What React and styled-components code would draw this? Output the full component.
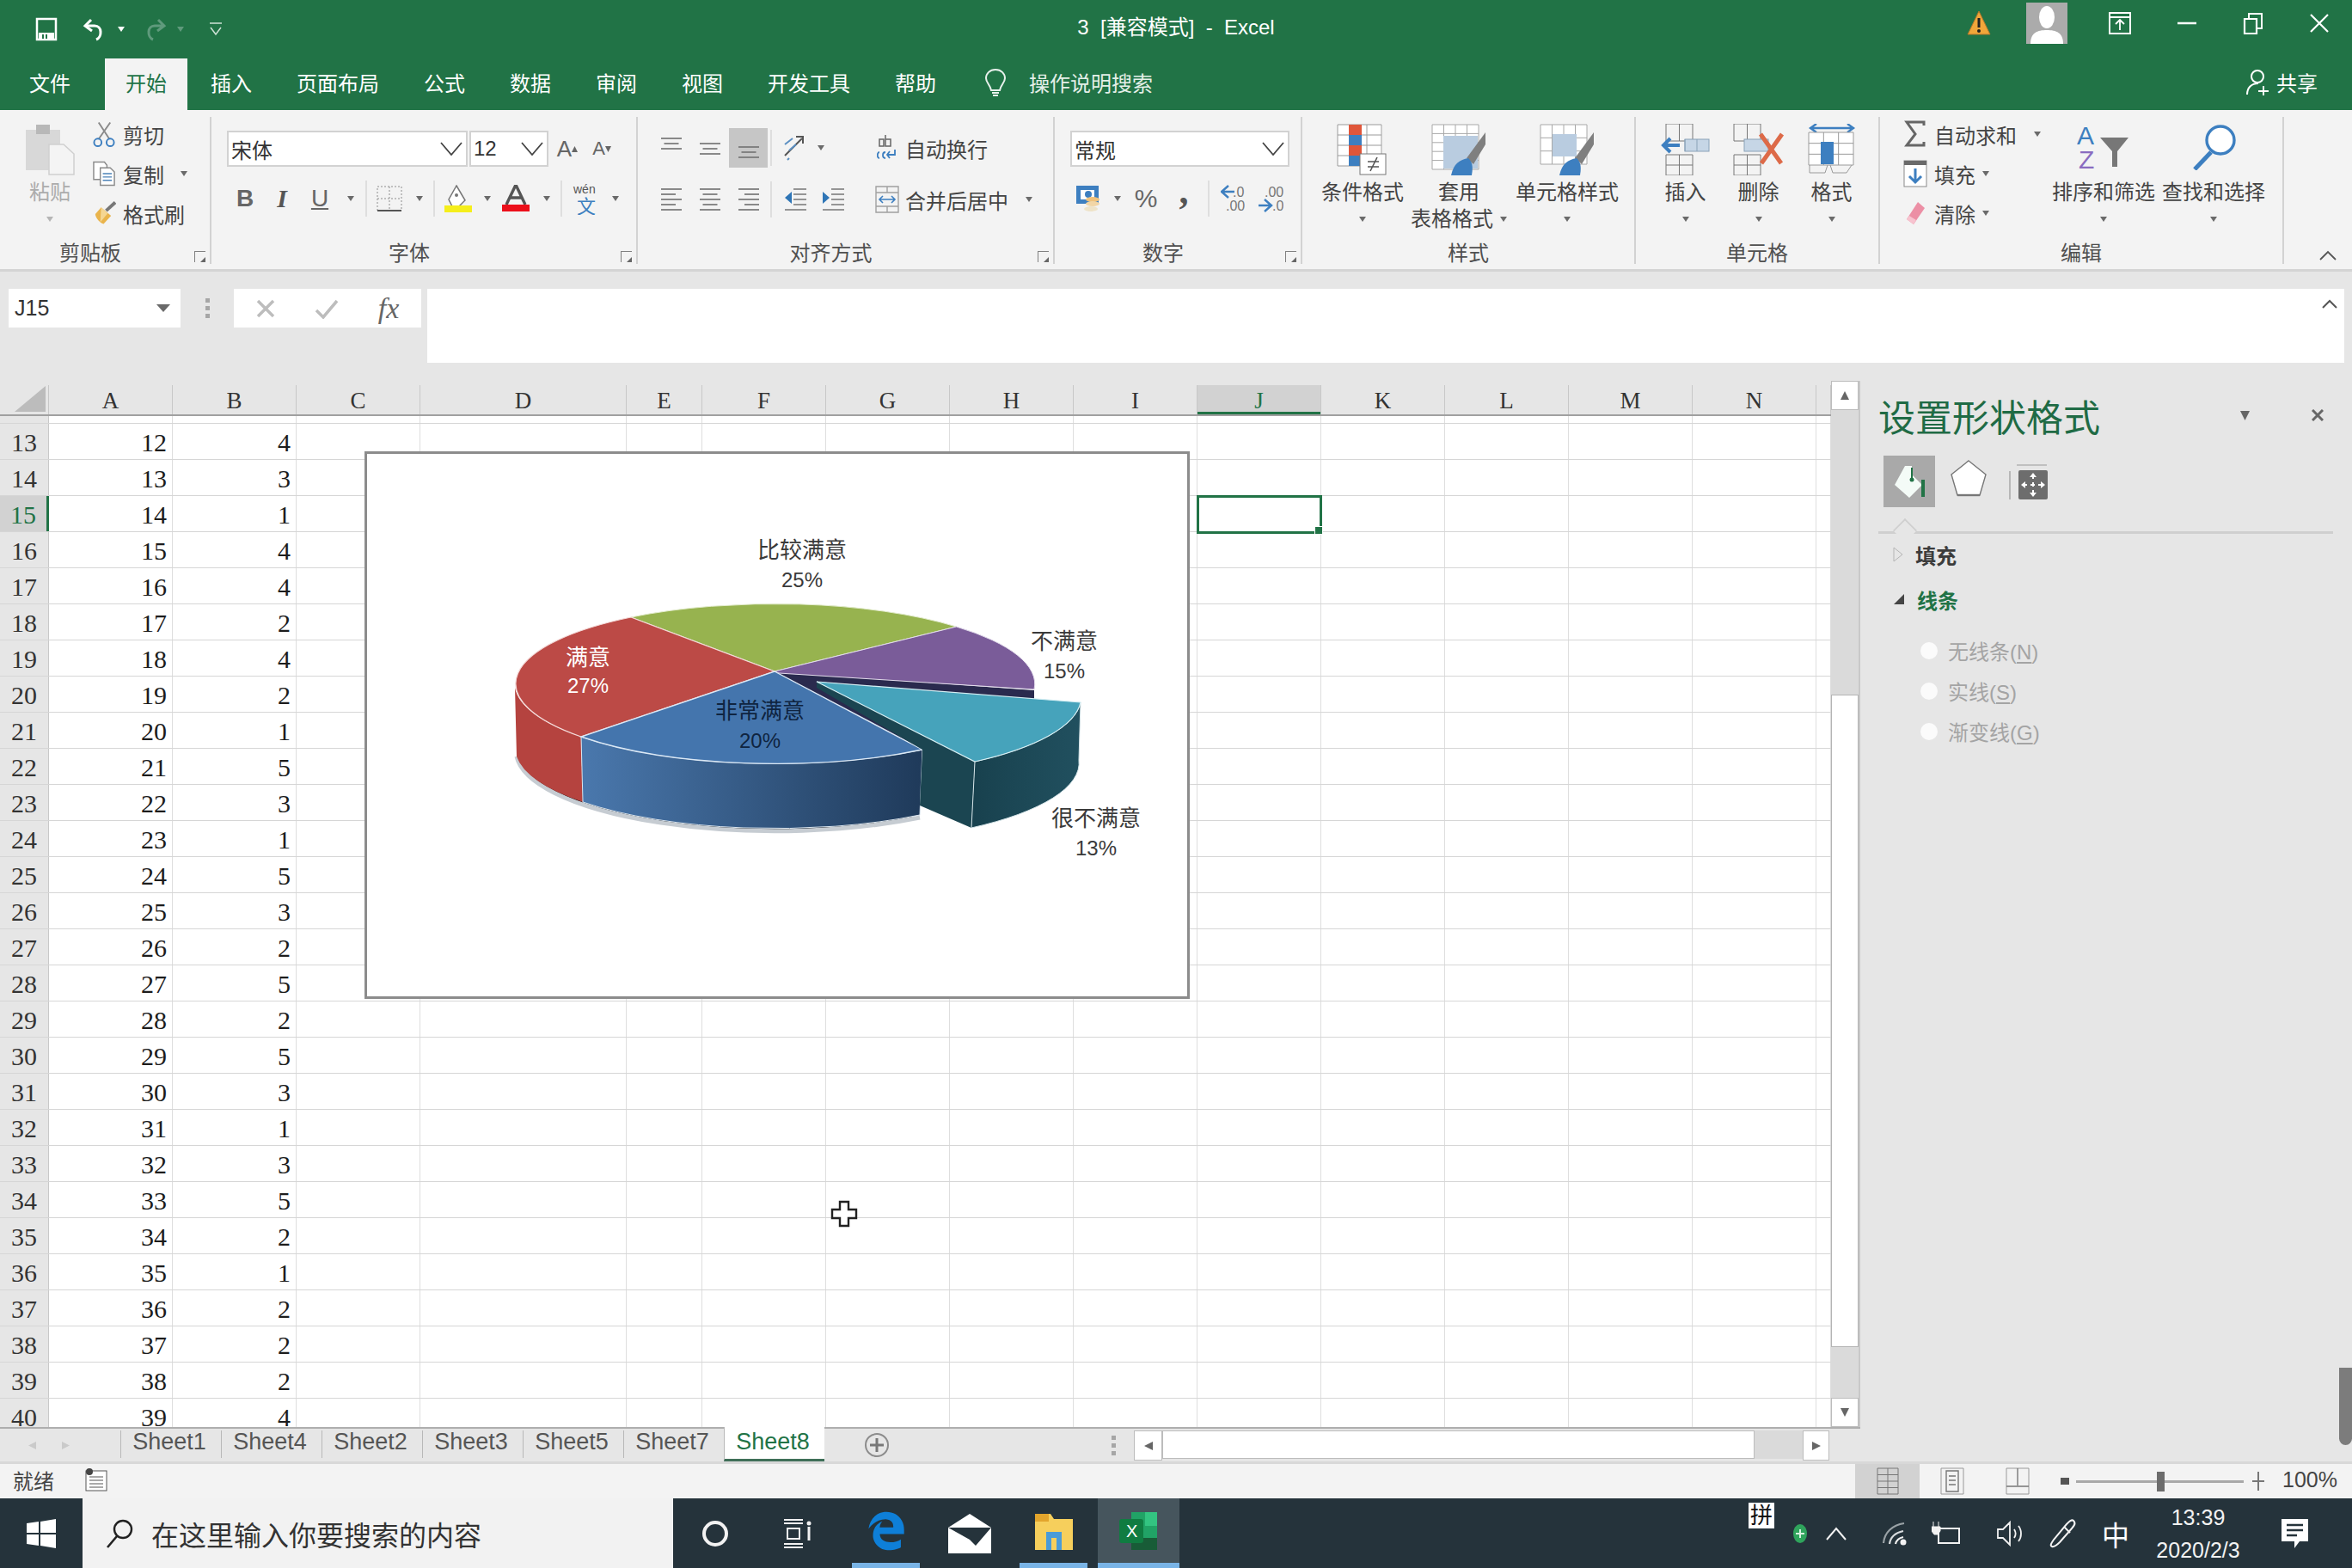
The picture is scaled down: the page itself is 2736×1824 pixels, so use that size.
import React from "react";
import styled, { createGlobalStyle } from "styled-components";
import { FaEdgeLegacy } from "react-icons/fa6";

const UI = `"Liberation Sans", "Noto Sans CJK SC", sans-serif`;
const GREEN = "#217346";

const GlobalStyle = createGlobalStyle`
  html, body { margin: 0; padding: 0; background: #e6e6e6; }
  * { box-sizing: border-box; }
`;

const Page = styled.div`
  width: 2736px;
  height: 1824px;
  overflow: hidden;
  display: flex;
  flex-direction: column;
  position: relative;
  font-family: ${UI};
  font-size: 24px;
  color: #444;
`;

/* ---------- title bar ---------- */
const TitleBar = styled.div`
  height: 68px;
  background: ${GREEN};
  display: grid;
  grid-template-columns: 1fr auto 1fr;
  align-items: center;
  color: #fff;
`;
const QuickAccess = styled.div`
  display: flex;
  align-items: center;
  padding-left: 24px;
  height: 62px;
`;
const Slot = styled.div`
  width: ${(p) => p.$w}px;
  height: ${(p) => p.$h || 42}px;
  flex: none;
  display: flex;
  align-items: center;
  justify-content: center;
  margin-right: ${(p) => p.$mr || 0}px;
  background: ${(p) => p.$bg || "transparent"};
  font-size: ${(p) => p.$fs || 24}px;
`;
const TitleText = styled.div`
  white-space: pre;
  font-size: 24px;
  margin-top: -10px;
`;
const WindowControls = styled.div`
  display: flex;
  justify-content: flex-end;
  align-items: flex-start;
  height: 68px;
`;
const ControlSlot = styled.div`
  width: ${(p) => p.$w}px;
  height: 54px;
  flex: none;
  display: flex;
  align-items: center;
  justify-content: center;
`;
const TabStrip = styled.div`
  height: 60px;
  background: ${GREEN};
  display: flex;
  align-items: stretch;
  padding-left: 8px;
  color: #fff;
`;
const Tab = styled.div`
  display: flex;
  align-items: center;
  padding: 0 ${(p) => (p.$active ? 24 : 26)}px 5px;
  margin: 0 ${(p) => (p.$active ? 1 : 0)}px 0 ${(p) => (p.$active ? 14 : 0)}px;
  background: ${(p) => (p.$active ? "#f3f3f3" : "transparent")};
  color: ${(p) => (p.$active ? GREEN : "#fff")};
`;
const SearchHint = styled.div`
  display: flex;
  align-items: center;
  margin-left: 30px;
  padding-bottom: 5px;
  gap: 26px;
  color: #e4efe8;
`;
const ShareBox = styled.div`
  margin-left: auto;
  padding: 0 40px 5px 0;
  display: flex;
  align-items: center;
  gap: 8px;
`;

/* ---------- ribbon ---------- */
const Ribbon = styled.div`
  height: 188px;
  background: #f3f3f3;
  border-bottom: 3px solid #d4d4d4;
  display: flex;
  align-items: stretch;
  position: relative;
`;
const Group = styled.div`
  width: ${(p) => p.$w}px;
  flex: none;
  margin: 8px 0 6px;
  border-right: 2px solid #d2d2d2;
  display: flex;
  flex-direction: column;
`;
const GroupBody = styled.div`
  flex: 1;
  display: flex;
  align-items: flex-start;
  padding-left: ${(p) => p.$pl || 0}px;
`;
const GroupLabelRow = styled.div`
  position: relative;
  height: 24px;
  line-height: 24px;
  text-align: center;
  padding-right: ${(p) => (p.$launcher ? 34 : 0)}px;
  color: #505050;
`;
const Launcher = styled.span`
  position: absolute;
  right: 5px;
  bottom: 2px;
  width: 13px;
  height: 13px;
  border-left: 1.5px solid #808080;
  border-top: 1.5px solid #808080;
  &::after {
    content: "";
    position: absolute;
    right: 0;
    bottom: 0;
    border-style: solid;
    border-width: 0 0 6px 6px;
    border-color: transparent transparent #666 transparent;
  }
`;
const Caret = styled.span`
  display: inline-block;
  width: 0;
  height: 0;
  border-style: solid;
  border-width: ${(p) => (p.$big ? "9px 8px 0 8px" : "6px 4.5px 0 4.5px")};
  border-color: ${(p) => p.$c || "#6a6a6a"} transparent transparent transparent;
`;
const BigButton = styled.div`
  width: ${(p) => p.$w}px;
  flex: none;
  display: flex;
  flex-direction: column;
  align-items: center;
  margin-left: ${(p) => p.$ml || 0}px;
  color: ${(p) => (p.$off ? "#acacac" : "#444")};
`;
const BigIcon = styled.div`
  height: 72px;
  padding-top: 8px;
  display: flex;
  align-items: flex-start;
  justify-content: center;
`;
const BigLine = styled.div`
  height: 31px;
  line-height: 31px;
  white-space: nowrap;
  display: flex;
  align-items: center;
  justify-content: center;
  gap: 8px;
`;
const SmallColumn = styled.div`
  display: flex;
  flex-direction: column;
  width: ${(p) => p.$w}px;
  flex: none;
`;
const SmallRow = styled.div`
  height: 46px;
  padding-bottom: 6px;
  display: flex;
  align-items: center;
  white-space: nowrap;
`;
const SmallCaret = styled.span`
  display: flex;
  margin-left: ${(p) => p.$ml}px;
`;
const ToolColumn = styled.div`
  display: flex;
  flex-direction: column;
  width: ${(p) => p.$w}px;
  flex: none;
`;
const ToolRow = styled.div`
  display: flex;
  align-items: center;
  height: 42px;
  margin-top: ${(p) => p.$mt || 0}px;
  white-space: nowrap;
`;
const ToolSep = styled.div`
  width: ${(p) => p.$w}px;
  height: 42px;
  flex: none;
  display: flex;
  justify-content: center;
  &::after {
    content: "";
    width: 2px;
    height: 100%;
    background: #dedede;
  }
`;
const ComboBox = styled.div`
  width: ${(p) => p.$w}px;
  height: 42px;
  flex: none;
  background: #fff;
  border: 2px solid #d2d2d2;
  display: flex;
  align-items: center;
  justify-content: space-between;
  padding: 0 4px 0 3px;
  margin-right: 2px;
  color: #333;
`;
const ToolGlyph = styled.span`
  font-family: "Liberation Serif", serif;
  font-size: ${(p) => p.$fs || 28}px;
  font-weight: ${(p) => (p.$b ? 700 : 400)};
  font-style: ${(p) => (p.$i ? "italic" : "normal")};
  transform: translateY(${(p) => p.$up || 0}px);
  color: #555;
`;
const SansGlyph = styled.span`
  font-family: ${UI};
  font-size: ${(p) => p.$fs || 24}px;
  font-weight: ${(p) => (p.$b ? 700 : 400)};
  text-decoration: ${(p) => (p.$u ? "underline" : "none")};
  color: #666;
`;
const Collapse = styled.div`
  position: absolute;
  right: 18px;
  bottom: 10px;
  display: flex;
`;

/* ---------- formula bar ---------- */
const FormulaBar = styled.div`
  height: 127px;
  background: #e6e6e6;
  display: flex;
  align-items: flex-start;
  padding: 20px 9px 0 10px;
`;
const NameBox = styled.div`
  width: 200px;
  height: 45px;
  background: #fff;
  display: flex;
  align-items: center;
  justify-content: space-between;
  padding: 0 12px 0 7px;
  color: #333;
  font-size: 25px;
`;
const Grip = styled.div`
  width: 62px;
  height: 45px;
  display: flex;
  flex-direction: column;
  align-items: center;
  justify-content: center;
  gap: 4px;
  span {
    width: 5px;
    height: 5px;
    background: #a6a6a6;
  }
`;
const FxBox = styled.div`
  width: 218px;
  height: 45px;
  background: #fff;
  display: flex;
  align-items: center;
  margin-right: 7px;
`;
const FxGlyph = styled.span`
  font-family: "Liberation Serif", serif;
  font-style: italic;
  font-size: 34px;
  color: #666;
`;
const FormulaInput = styled.div`
  flex: 1;
  height: 86px;
  background: #fff;
  display: flex;
  justify-content: flex-end;
  padding: 12px 8px 0 0;
`;

/* ---------- sheet ---------- */
const Main = styled.div`
  height: 1257px;
  display: flex;
  align-items: stretch;
`;
const LeftSide = styled.div`
  width: 2164px;
  flex: none;
  display: flex;
  flex-direction: column;
`;
const SheetRow = styled.div`
  height: 1217px;
  display: flex;
`;
const SheetArea = styled.div`
  width: 2130px;
  flex: none;
  position: relative;
  padding-top: 5px;
  display: flex;
  flex-direction: column;
`;
const ColumnHeader = styled.div`
  height: 36px;
  flex: none;
  display: flex;
  background: #e6e6e6;
  border-bottom: 2px solid #a0a0a0;
`;
const Corner = styled.div`
  width: 57px;
  flex: none;
  display: flex;
  align-items: flex-end;
  justify-content: flex-end;
  padding: 0 3px 3px 0;
  border-right: 1px solid #c8c8c8;
`;
const ColumnCell = styled.div`
  width: ${(p) => p.$w}px;
  flex: none;
  display: flex;
  align-items: center;
  justify-content: center;
  padding-top: 2px;
  font-family: "Liberation Serif", serif;
  font-size: 27px;
  border-right: 1px solid #c8c8c8;
  color: ${(p) => (p.$sel ? GREEN : "#333")};
  background: ${(p) => (p.$sel ? "#d2d2d2" : "transparent")};
  box-shadow: ${(p) => (p.$sel ? `inset 0 -3px 0 ${GREEN}` : "none")};
`;
const Rows = styled.div`
  flex: 1;
  overflow: hidden;
  background: #fff;
`;
const Row = styled.div`
  height: ${(p) => p.$h}px;
  display: flex;
  overflow: hidden;
  border-bottom: 1px solid #d6d6d6;
  align-items: stretch;
`;
const RowHead = styled.div`
  width: 57px;
  flex: none;
  display: flex;
  align-items: ${(p) => (p.$clip ? "flex-end" : "center")};
  justify-content: center;
  padding-top: ${(p) => (p.$clip ? 0 : 3)}px;
  font-family: "Liberation Serif", serif;
  font-size: 30px;
  line-height: 38px;
  background: ${(p) => (p.$sel ? "#d2d2d2" : "#e6e6e6")};
  color: ${(p) => (p.$sel ? GREEN : "#333")};
  border-right: ${(p) => (p.$sel ? `3px solid ${GREEN}` : "1px solid #c8c8c8")};
`;
const Cell = styled.div`
  width: ${(p) => p.$w}px;
  flex: none;
  display: flex;
  align-items: ${(p) => (p.$clip ? "flex-end" : "center")};
  justify-content: flex-end;
  padding: ${(p) => (p.$clip ? 0 : 3)}px 6px 0 0;
  font-family: "Liberation Serif", serif;
  font-size: 30px;
  line-height: 38px;
  color: #1c1c1c;
  border-right: 1px solid #dedede;
`;
const ChartBox = styled.div`
  position: absolute;
  left: 424px;
  top: 82px;
  width: 960px;
  height: 637px;
  background: #fff;
  border: 3px solid #8c8c8c;
`;
const ChartSvg = styled.svg`
  display: block;
  width: 100%;
  height: 100%;
`;
const ChartText = styled.text`
  font-family: ${UI};
  font-size: ${(p) => p.$fs || 26}px;
  text-anchor: middle;
  fill: ${(p) => p.$c || "#3a3a3a"};
`;
const SelectedCell = styled.div`
  position: absolute;
  left: 1392px;
  top: 133px;
  width: 146px;
  height: 45px;
  border: 3px solid ${GREEN};
  &::after {
    content: "";
    position: absolute;
    right: -4px;
    bottom: -4px;
    width: 8px;
    height: 8px;
    background: ${GREEN};
    border: 1px solid #fff;
  }
`;
const CrossCursor = styled.svg`
  position: absolute;
  left: 966px;
  top: 953px;
`;
const VScroll = styled.div`
  width: 34px;
  flex: none;
  background: #dadada;
  display: flex;
  flex-direction: column;
  border-right: 2px solid #c8c8c8;
`;
const ScrollButton = styled.div`
  width: ${(p) => p.$w || 32}px;
  height: ${(p) => p.$h || 34}px;
  flex: none;
  background: #fff;
  border: 1px solid #bcbcbc;
  display: flex;
  align-items: center;
  justify-content: center;
`;
const VThumb = styled.div`
  width: 32px;
  height: 759px;
  margin-top: 331px;
  margin-bottom: auto;
  background: #fff;
  border: 1px solid #b4b4b4;
`;

/* ---------- sheet tabs ---------- */
const TabBar = styled.div`
  height: 40px;
  flex: none;
  display: flex;
  align-items: stretch;
  background: #e6e6e6;
  border-top: 2px solid #aeaeae;
`;
const TabNav = styled.div`
  width: 140px;
  flex: none;
  display: flex;
  align-items: center;
  padding-left: 33px;
  gap: 30px;
`;
const SheetTab = styled.div`
  width: 117px;
  flex: none;
  display: flex;
  align-items: center;
  justify-content: center;
  padding: 0 4px ${(p) => (p.$active ? 2 : 5)}px 0;
  font-size: 27px;
  border-left: 1px solid #b8b8b8;
  margin: ${(p) => (p.$active ? "-3px 0 0" : "2px 0 4px")};
  background: ${(p) => (p.$active ? "#fff" : "transparent")};
  color: ${(p) => (p.$active ? GREEN : "#555")};
  border-bottom: ${(p) => (p.$active ? "3px solid #3f6f58" : "0")};
`;
const AddSheet = styled.div`
  width: 122px;
  flex: none;
  display: flex;
  align-items: center;
  justify-content: center;
`;
const TabGrip = styled(Grip)`
  width: 24px;
  height: auto;
  margin-left: auto;
  margin-right: 12px;
`;
const HScroll = styled.div`
  width: 809px;
  flex: none;
  margin: 2px 36px 3px 0;
  display: flex;
  background: #dadada;
`;
const HThumb = styled.div`
  width: 689px;
  background: #fff;
  border: 1px solid #bcbcbc;
`;
const HTrack = styled.div`
  flex: 1;
`;

/* ---------- format pane ---------- */
const Pane = styled.div`
  flex: 1;
  background: #e6e6e6;
  display: flex;
  flex-direction: column;
  padding: 0 23px 0 24px;
`;
const PaneHead = styled.div`
  height: 80px;
  display: flex;
  align-items: center;
  margin-left: -3px;
`;
const PaneTitle = styled.div`
  font-size: 43px;
  color: #1f6b45;
  white-space: nowrap;
`;
const PaneTools = styled.div`
  display: flex;
  align-items: center;
  margin-left: auto;
  gap: 72px;
  padding-right: 11px;
`;
const PaneIcons = styled.div`
  display: flex;
  align-items: center;
  height: 60px;
  margin-top: 7px;
  padding-left: 3px;
`;
const PaneIcon = styled.div`
  width: ${(p) => p.$w}px;
  height: 60px;
  flex: none;
  display: flex;
  align-items: center;
  justify-content: center;
  background: ${(p) => (p.$active ? "#a9a9a9" : "transparent")};
`;
const PaneRule = styled.div`
  position: relative;
  height: 3px;
  margin-top: 28px;
  width: 529px;
  margin-left: -3px;
  background: #cfcfcf;
  &::before {
    content: "";
    position: absolute;
    left: 20px;
    top: -12px;
    width: 20px;
    height: 20px;
    background: #e6e6e6;
    border-left: 2px solid #cfcfcf;
    border-top: 2px solid #cfcfcf;
    transform: rotate(45deg) scale(0.9);
  }
`;
const Section = styled.div`
  display: flex;
  align-items: center;
  height: 52px;
  margin-top: ${(p) => p.$mt}px;
  gap: 14px;
  padding-left: 14px;
  font-weight: 700;
  color: ${(p) => (p.$open ? "#217346" : "#3c3c3c")};
`;
const RadioList = styled.div`
  display: flex;
  flex-direction: column;
  margin-top: 10px;
`;
const RadioRow = styled.div`
  height: 47px;
  display: flex;
  align-items: center;
  gap: 12px;
  padding-left: 46px;
  color: #a4a4a4;
  u { text-underline-offset: 3px; }
`;
const RadioDot = styled.span`
  width: 20px;
  height: 20px;
  border-radius: 50%;
  background: #fbfbfb;
`;
const PaneScrollMark = styled.div`
  position: absolute;
  right: 0;
  top: 1591px;
  width: 15px;
  height: 90px;
  background: #7c7c7c;
  border-radius: 0 0 8px 8px;
`;

/* ---------- status bar ---------- */
const StatusBar = styled.div`
  height: 43px;
  flex: none;
  background: #f3f3f3;
  border-top: 3px solid #d8d8d8;
  display: flex;
  align-items: stretch;
  color: #444;
`;
const StatusLeft = styled.div`
  display: flex;
  align-items: center;
  padding: 0 0 4px 15px;
  gap: 36px;
  width: 2158px;
  flex: none;
`;
const ViewButton = styled.div`
  width: ${(p) => p.$w}px;
  flex: none;
  display: flex;
  align-items: center;
  justify-content: center;
  background: ${(p) => (p.$active ? "#d2d2d2" : "transparent")};
`;
const ZoomBlock = styled.div`
  display: flex;
  align-items: center;
  margin-left: 12px;
`;
const ZoomTrack = styled.div`
  position: relative;
  width: 195px;
  height: 3px;
  background: #a8a8a8;
  margin: 0 8px 0 8px;
`;
const ZoomThumb = styled.span`
  position: absolute;
  left: 94px;
  top: -10px;
  width: 9px;
  height: 23px;
  background: #6c6c6c;
`;
const ZoomValue = styled.span`
  margin-left: 19px;
  padding-bottom: 3px;
  font-size: 25px;
  color: #444;
`;

/* ---------- taskbar ---------- */
const Taskbar = styled.div`
  flex: 1;
  background: #25333b;
  display: flex;
  align-items: stretch;
  color: #fff;
`;
const StartButton = styled.div`
  width: 96px;
  flex: none;
  display: flex;
  align-items: center;
  justify-content: center;
`;
const SearchBox = styled.div`
  width: 687px;
  flex: none;
  background: #f2f2f2;
  display: flex;
  align-items: center;
  padding-left: 26px;
  gap: 20px;
  font-size: 32px;
  color: #333;
`;
const TaskIcon = styled.div`
  width: ${(p) => p.$w}px;
  flex: none;
  display: flex;
  align-items: center;
  justify-content: center;
  background: ${(p) => (p.$active ? "#46555d" : "transparent")};
  border-bottom: ${(p) => (p.$open ? "6px solid #79b4e6" : "0")};
  margin-left: ${(p) => p.$ml || 0}px;
  color: #0e7fd8;
`;
const Tray = styled.div`
  margin-left: auto;
  padding-right: 8px;
  display: flex;
  align-items: center;
  position: relative;
`;
const ImeBadge = styled.div`
  position: absolute;
  left: 0;
  top: 5px;
  width: 30px;
  height: 30px;
  background: #fff;
  color: #111;
  font-size: 26px;
  line-height: 30px;
  text-align: center;
`;
const TrayItem = styled.div`
  width: ${(p) => p.$w}px;
  flex: none;
  display: flex;
  align-items: center;
  justify-content: center;
  font-size: ${(p) => p.$fs || 24}px;
`;
const Clock = styled.div`
  width: 110px;
  flex: none;
  text-align: center;
  font-size: 25px;
  line-height: 38px;
  color: #f2f2f2;
`;

/* ---------- icons ---------- */
const Svg = ({ w, h, children }) => (
  <svg width={w} height={h} viewBox={`0 0 ${w} ${h}`} fill="none">
    {children}
  </svg>
);

const SaveIcon = () => (
  <Svg w={26} h={28}>
    <path d="M2 2h22v24H2z" stroke="#fff" strokeWidth="2.5" />
    <path d="M4 18h18v8H4z" fill="#fff" />
    <path d="M9 20v5M13 20v5" stroke={GREEN} strokeWidth="2" />
  </Svg>
);
const UndoIcon = ({ c = "#fff" }) => (
  <Svg w={30} h={30}>
    <path d="M11 4 4 11l8 6" stroke={c} strokeWidth="3" />
    <path d="M5 11h10c9 0 9 13 2 16" stroke={c} strokeWidth="3" />
  </Svg>
);
const RedoIcon = () => (
  <Svg w={30} h={30}>
    <path d="M19 4l7 7-8 6M25 11H15c-9 0-9 13-2 16" stroke="#5f9a7c" strokeWidth="3" />
  </Svg>
);
const CustomizeIcon = () => (
  <Svg w={18} h={18}>
    <path d="M2 2h14" stroke="#cfe2d7" strokeWidth="1.5" />
    <path d="M3 7l6 8 6-8" stroke="#cfe2d7" strokeWidth="1.5" />
  </Svg>
);
const WarningIcon = () => (
  <Svg w={30} h={30}>
    <path d="M15 1 2 28h26z" fill="#f1a63a" stroke="#b4762a" />
    <path d="M15 9v11" stroke="#222" strokeWidth="3" />
    <circle cx="15" cy="24" r="2" fill="#222" />
  </Svg>
);
const AvatarIcon = () => (
  <Svg w={48} h={48}>
    <rect width="48" height="48" fill="#ababab" />
    <ellipse cx="24" cy="17" rx="9" ry="13" fill="#fff" />
    <path d="M5 48c0-13 8-16 19-16s19 3 19 16z" fill="#fff" />
  </Svg>
);
const RibbonDisplayIcon = () => (
  <Svg w={28} h={28}>
    <path d="M2 2h24v24H2zM2 7h24" stroke="#fff" strokeWidth="2" />
    <path d="M14 22V11M9 15l5-5 5 5" stroke="#fff" strokeWidth="1.8" />
  </Svg>
);
const MinIcon = () => (
  <Svg w={24} h={6}>
    <path d="M1 3h22" stroke="#fff" strokeWidth="2.5" />
  </Svg>
);
const RestoreIcon = () => (
  <Svg w={24} h={26}>
    <path d="M2 8h14v17H2z" stroke="#fff" strokeWidth="2.2" />
    <path d="M7 8V2h15v17h-6" stroke="#fff" strokeWidth="2" />
  </Svg>
);
const CloseIcon = () => (
  <Svg w={24} h={24}>
    <path d="M2 2l20 20M22 2 2 22" stroke="#fff" strokeWidth="2.2" />
  </Svg>
);
const BulbIcon = () => (
  <Svg w={26} h={34}>
    <path d="M13 2C6 2 2 7 2 12c0 5 5 8 6 14h10c1-6 6-9 6-14 0-5-4-10-11-10z" stroke="#e8f1ec" strokeWidth="2" />
    <path d="M9 29h8M10 32h6" stroke="#e8f1ec" strokeWidth="2" />
  </Svg>
);
const ShareIcon = () => (
  <Svg w={28} h={32}>
    <circle cx="14" cy="9" r="7" stroke="#fff" strokeWidth="2" />
    <path d="M2 30c0-8 5-13 13-13" stroke="#fff" strokeWidth="2" />
    <path d="M21 20v11M15 26h12" stroke="#fff" strokeWidth="2" />
  </Svg>
);
const PasteIcon = () => (
  <Svg w={58} h={60}>
    <rect x="1" y="7" width="40" height="47" fill="#d8d8d8" />
    <rect x="13" y="1" width="16" height="11" fill="#b8b8b8" />
    <path d="M28 24h17l12 11v24H28z" fill="#f4f4f4" stroke="#cfcfcf" strokeWidth="1.5" />
  </Svg>
);
const CutIcon = () => (
  <Svg w={28} h={30}>
    <path d="M7 1l13 20M21 1 7 21" stroke="#8a8a8a" strokeWidth="2" />
    <circle cx="6" cy="25" r="4.5" stroke="#3d7fc0" strokeWidth="2" />
    <circle cx="21" cy="25" r="4.5" stroke="#3d7fc0" strokeWidth="2" />
  </Svg>
);
const CopyIcon = () => (
  <Svg w={28} h={30}>
    <path d="M1 1h13l3 4v17H1z" fill="#fff" stroke="#8a8a8a" strokeWidth="1.5" />
    <path d="M9 8h12l5 5v16H9z" fill="#fff" stroke="#8a8a8a" strokeWidth="1.5" />
    <path d="M12 15h11M12 19h11M12 23h11" stroke="#4c82b8" strokeWidth="1.5" />
  </Svg>
);
const BrushIcon = () => (
  <Svg w={28} h={28}>
    <path d="M16 11 27 1" stroke="#777" strokeWidth="4" />
    <path d="M10 7l12 10-9 10C9 26 3 20 3 15z" fill="#e9b44c" />
    <path d="M10 7l8 7-9 11" fill="#f5d692" />
  </Svg>
);
const Chevron = ({ w = 26, h = 16, c = "#444" }) => (
  <Svg w={w} h={h}>
    <path d={`M1 1l${w / 2 - 1} ${h - 2} ${w / 2 - 1}-${h - 2}`} stroke={c} strokeWidth="1.8" />
  </Svg>
);
const BorderIcon = () => (
  <Svg w={30} h={30}>
    <path d="M1 1h28v28H1zM15 1v28M1 15h28" stroke="#b0b0b0" strokeWidth="1.5" strokeDasharray="2 2" />
    <path d="M1 29h28" stroke="#555" strokeWidth="2" />
  </Svg>
);
const FillIcon = () => (
  <Svg w={32} h={32}>
    <path d="M14 1l10 17-7 7H9L5 17z" fill="#fff" stroke="#777" strokeWidth="1.5" />
    <circle cx="14" cy="12" r="2" fill="#777" />
    <rect y="24" width="32" height="8" fill="#f5ee1b" />
  </Svg>
);
const FontColorIcon = () => (
  <Svg w={32} h={32}>
    <path d="M5 23 16 0l11 23M9 15h14" stroke="#555" strokeWidth="3.4" />
    <rect y="23" width="32" height="8" fill="#ec0f1a" />
  </Svg>
);
const LinesIcon = ({ ys, align = "center", w = 24, c = "#777" }) => (
  <Svg w={w} h={30}>
    {ys.map((y, i) => {
      const len = i % 2 === 0 ? w : w - 7;
      const x = align === "left" ? 0 : align === "right" ? w - len : (w - len) / 2;
      return <path key={y} d={`M${x} ${y}h${len}`} stroke={c} strokeWidth="1.7" />;
    })}
  </Svg>
);
const OrientIcon = () => (
  <Svg w={30} h={34}>
    <path d="M3 26 23 6M16 4h8v8" stroke="#555" strokeWidth="2" />
    <path d="M3 13l9-7M8 20l8-7M6 31l2-2" stroke="#5b8fc2" strokeWidth="2" />
  </Svg>
);
const IndentIcon = ({ out }) => (
  <Svg w={28} h={30}>
    <path d="M12 3h15M12 9h15M12 15h15M12 21h15M2 27h25" stroke="#777" strokeWidth="1.6" />
    {out ? (
      <path d="M10 6 2 13l8 7zM10 13h0" fill="#2e75b6" />
    ) : (
      <path d="M2 6l8 7-8 7z" fill="#2e75b6" />
    )}
  </Svg>
);
const WrapIcon = () => (
  <Svg w={24} h={30}>
    <path d="M3 20c-3 0-3 7 0 7M10 20c-4 0-4 7 0 7" stroke="#3d7fc0" strokeWidth="1.8" />
    <path d="M21 17v6h-9M15 19l-3 4 3 4" stroke="#3d7fc0" strokeWidth="1.8" />
    <path d="M3 5h5v8H3zM10 0v13h6V5h-6" stroke="#666" strokeWidth="1.5" />
  </Svg>
);
const MergeIcon = () => (
  <Svg w={28} h={32}>
    <path d="M1 1h26v30H1zM1 8h26M1 24h26M14 1v7M14 24v7" stroke="#a0a0a0" strokeWidth="1.4" />
    <path d="M5 16h18M9 12l-4 4 4 4M19 12l4 4-4 4" stroke="#3d7fc0" strokeWidth="1.6" />
  </Svg>
);
const CurrencyIcon = () => (
  <Svg w={30} h={32}>
    <rect x="1" y="1" width="26" height="21" fill="#3d7fc0" />
    <rect x="6" y="6" width="16" height="11" fill="#fff" />
    <circle cx="15" cy="11" r="4" fill="#3d7fc0" />
    <ellipse cx="20" cy="17" rx="8" ry="3" fill="#f0c27c" />
    <ellipse cx="20" cy="22" rx="8" ry="3" fill="#f2d6a6" />
    <ellipse cx="18" cy="28" rx="8" ry="3" fill="#eee3c8" />
  </Svg>
);
const DecimalIcon = ({ down }) => (
  <Svg w={30} h={32}>
    <path d={down ? "M8 17l8 7-8 7M1 24h14" : "M9 1 1 8l8 7M16 8H2"} stroke="#3d7fc0" strokeWidth="2.4" />
    <text x={down ? 8 : 14} y="14" fontSize="16" fill="#777" fontFamily="Liberation Sans">
      {down ? ".00" : ".0"}
    </text>
    <text x={down ? 17 : 6} y="30" fontSize="16" fill="#777" fontFamily="Liberation Sans">
      {down ? ".0" : ".00"}
    </text>
  </Svg>
);
const GridLines = ({ x, y, w, h, nx, ny, c = "#9a9a9a" }) => {
  const d = [];
  for (let i = 0; i <= nx; i++) d.push(`M${x + (w * i) / nx} ${y}v${h}`);
  for (let j = 0; j <= ny; j++) d.push(`M${x} ${y + (h * j) / ny}h${w}`);
  return <path d={d.join("")} stroke={c} strokeWidth="1" />;
};
const CondFormatIcon = () => (
  <Svg w={60} h={60}>
    <rect x="1" y="1" width="52" height="48" fill="#fff" />
    <GridLines x={1} y={1} w={51} h={48} nx={3} ny={4} />
    <rect x="14" y="1" width="15" height="12" fill="#e0563a" />
    <rect x="14" y="13" width="15" height="12" fill="#3d7fc0" />
    <rect x="14" y="25" width="15" height="12" fill="#e0563a" />
    <rect x="14" y="37" width="15" height="12" fill="#3d7fc0" />
    <rect x="27" y="35" width="30" height="24" fill="#fff" stroke="#777" />
    <path d="M36 44h13M36 50h13M47 39l-8 16" stroke="#555" strokeWidth="1.6" />
  </Svg>
);
const TableFormatIcon = ({ tall }) => (
  <Svg w={66} h={60}>
    <rect x="2" y="1" width="54" height={tall ? 52 : 46} fill="#fff" />
    <GridLines x={2} y={1} w={54} h={tall ? 52 : 46} nx={4} ny={tall ? 5 : 3} c="#a8a8a8" />
    <rect x={tall ? 15 : 16} y={tall ? 14 : 12} width={tall ? 40 : 28} height={tall ? 38 : 26} fill="#b9cce0" />
    <path d="M42 40 64 10v14L50 47z" fill="#7f7f7f" />
    <path d="M24 60c3-14 10-18 20-20 4 4 6 8 4 20z" fill="#3d7fc0" />
  </Svg>
);
const InsertIcon = () => (
  <Svg w={58} h={60}>
    <GridLines x={6} y={0} w={31} h={20} nx={2} ny={1} c="#777" />
    <GridLines x={6} y={36} w={31} h={24} nx={2} ny={2} c="#777" />
    <rect x="28" y="18" width="28" height="14" fill="#c6d6e6" stroke="#8aa2b8" />
    <path d="M28 25l0 0M28 18v14M42 18v14" stroke="#8aa2b8" />
    <path d="M22 25H4M11 17l-8 8 8 8" stroke="#3d7fc0" strokeWidth="4" />
  </Svg>
);
const DeleteIcon = () => (
  <Svg w={62} h={60}>
    <GridLines x={2} y={0} w={31} h={20} nx={2} ny={1} c="#777" />
    <GridLines x={2} y={36} w={31} h={24} nx={2} ny={2} c="#777" />
    <rect x="14" y="18" width="28" height="14" fill="#c6d6e6" stroke="#8aa2b8" />
    <path d="M33 12l24 34M58 12 34 46" stroke="#dd6a48" strokeWidth="5" />
  </Svg>
);
const FormatIcon = () => (
  <Svg w={56} h={58}>
    <path d="M4 5h48M10 0 3 5l7 5M46 0l7 5-7 5" stroke="#3d7fc0" strokeWidth="2.4" />
    <rect x="1" y="10" width="52" height="38" fill="#fff" />
    <GridLines x={1} y={10} w={52} h={38} nx={3} ny={3} c="#9a9a9a" />
    <rect x="15" y="21" width="15" height="26" fill="#3d7fc0" />
    <path d="M2 48v9h18l3-9M26 48l3 9h16l6-9" stroke="#9a9a9a" />
  </Svg>
);
const SigmaIcon = () => (
  <Svg w={26} h={32}>
    <path d="M23 6V2H3l10 14L3 29h20v-4" stroke="#666" strokeWidth="3" />
  </Svg>
);
const FillDownIcon = () => (
  <Svg w={28} h={32}>
    <rect x="1" y="1" width="26" height="30" fill="#fff" stroke="#8a8a8a" />
    <rect x="1" y="1" width="26" height="5" fill="#6a6a6a" />
    <path d="M14 10v16M7 19l7 7 7-7" stroke="#3d7fc0" strokeWidth="3" />
  </Svg>
);
const EraserIcon = () => (
  <Svg w={24} h={28}>
    <path d="M15 1l8 7L10 27 2 21z" fill="#ec8fa5" />
    <path d="M2 21l8 6 3-5-8-5z" fill="#f7c3cf" />
  </Svg>
);
const SortIcon = () => (
  <Svg w={62} h={54}>
    <text x="0" y="24" fontSize="30" fill="#3d7fc0" fontFamily="Liberation Sans">A</text>
    <text x="2" y="52" fontSize="30" fill="#8a6cc0" fontFamily="Liberation Sans">Z</text>
    <path d="M27 16h33L47 32v18h-6V32z" fill="#777" />
  </Svg>
);
const FindIcon = () => (
  <Svg w={56} h={54}>
    <circle cx="36" cy="19" r="16" stroke="#3d7fc0" strokeWidth="3.4" fill="#fff" />
    <path d="M25 33 6 53" stroke="#3d7fc0" strokeWidth="5" />
  </Svg>
);
const CornerTriangle = () => (
  <Svg w={36} h={30}>
    <path d="M36 0v30H0z" fill="#bcbcbc" />
  </Svg>
);
const ArrowTri = ({ dir, c = "#666", s = 10 }) => {
  const pts = {
    up: `0,${s} ${s},${s} ${s / 2},0`,
    down: `0,0 ${s},0 ${s / 2},${s}`,
    left: `${s},0 ${s},${s} 0,${s / 2}`,
    right: `0,0 0,${s} ${s},${s / 2}`,
  };
  return (
    <svg width={s} height={s} viewBox={`0 0 ${s} ${s}`}>
      <polygon points={pts[dir]} fill={c} />
    </svg>
  );
};
const PlusCircle = () => (
  <Svg w={30} h={30}>
    <circle cx="15" cy="15" r="13" stroke="#8c8c8c" strokeWidth="2" />
    <path d="M15 7v16M7 15h16" stroke="#777" strokeWidth="3" />
  </Svg>
);
const BucketPaneIcon = () => (
  <Svg w={44} h={44}>
    <path d="M17 4h8v10l12 12-15 15L5 26z" fill="#f4fbf7" />
    <path d="M25 6v14" stroke={GREEN} strokeWidth="2" />
    <circle cx="25" cy="20" r="2.5" fill={GREEN} />
    <path d="M38 20v20" stroke={GREEN} strokeWidth="4" />
  </Svg>
);
const PentagonIcon = () => (
  <Svg w={44} h={50}>
    <path d="M22 1 42 17l-7 24H9L2 17z" fill="#fff" stroke="#777" strokeWidth="1.4" />
    <path d="M9 41h26" stroke="#777" strokeWidth="2.4" />
  </Svg>
);
const SizeIcon = () => (
  <Svg w={46} h={50}>
    <path d="M1 13v33M9 6h35" stroke="#999" strokeWidth="1.2" />
    <rect x="11" y="12" width="34" height="34" rx="2" fill="#6d6d6d" />
    <path d="M28 17v24M16 29h24" stroke="#fff" strokeWidth="2" strokeDasharray="5 4" />
    <path d="M24 20l4-5 4 5zM24 38l4 5 4-5zM19 25l-5 4 5 4zM37 25l5 4-5 4z" fill="#fff" />
  </Svg>
);
const NormalViewIcon = () => (
  <Svg w={26} h={32}>
    <GridLines x={1} y={1} w={24} h={30} nx={2} ny={4} c="#777" />
  </Svg>
);
const PageViewIcon = () => (
  <Svg w={28} h={32}>
    <path d="M1 1h26v30H1z" stroke="#999" />
    <path d="M7 4h14v24H7zM10 10h8M10 15h8M10 20h8" stroke="#777" strokeWidth="1.4" />
  </Svg>
);
const BreakViewIcon = () => (
  <Svg w={28} h={32}>
    <path d="M1 1h26v30H1z" stroke="#999" />
    <path d="M14 1v20M1 22h26" stroke="#777" strokeWidth="1.4" />
  </Svg>
);
const NotesIcon = () => (
  <Svg w={26} h={28}>
    <rect x="1" y="4" width="24" height="23" fill="#fff" stroke="#555" />
    <path d="M5 11h16M5 15h16M5 19h16M5 23h16" stroke="#555" />
    <circle cx="5" cy="5" r="4" fill="#444" />
  </Svg>
);
const WindowsIcon = () => (
  <Svg w={34} h={34}>
    <path d="M0 5l14-2v13H0zM16 3l18-3v16H16zM0 18h14v13L0 29zM16 18h18v16l-18-3z" fill="#fff" />
  </Svg>
);
const MagnifierIcon = () => (
  <Svg w={34} h={36}>
    <circle cx="21" cy="13" r="10" stroke="#222" strokeWidth="2.4" />
    <path d="M14 21 3 34" stroke="#222" strokeWidth="2.6" />
  </Svg>
);
const CortanaIcon = () => (
  <Svg w={32} h={32}>
    <circle cx="16" cy="16" r="13" stroke="#f2f2f2" strokeWidth="4" />
  </Svg>
);
const TaskViewIcon = () => (
  <Svg w={34} h={36}>
    <path d="M2 2h22M2 6h22M2 30h22M2 34h22M6 12h14v12H6z" stroke="#f2f2f2" strokeWidth="2" />
    <path d="M31 10v16" stroke="#f2f2f2" strokeWidth="3" />
    <circle cx="31" cy="6" r="2.5" fill="#f2f2f2" />
  </Svg>
);
const MailIcon = () => (
  <Svg w={50} h={46}>
    <path d="M0 16 25 0l25 16v30H0z" fill="#fff" />
    <path d="M0 16h50L32 37l-7-7z" fill="#25333b" />
  </Svg>
);
const FolderIcon = () => (
  <Svg w={46} h={46}>
    <path d="M1 3h18l4 6h22v36H1z" fill="#f6cf5c" />
    <path d="M1 3h16v9H1z" fill="#e2a52c" />
    <path d="M14 45V24h18v21h-6V31h-6v14z" fill="#4a9bd8" />
  </Svg>
);
const ExcelIcon = () => (
  <Svg w={46} h={48}>
    <path d="M14 2h30v44H14z" fill="#21a366" />
    <path d="M30 2h14v16H30z" fill="#33c481" />
    <path d="M14 32h30v14H14z" fill="#185c37" />
    <rect x="0" y="10" width="28" height="28" rx="3" fill="#107c41" />
    <text x="8" y="31" fontSize="20" fill="#fff" fontFamily="Liberation Sans">X</text>
  </Svg>
);
const WifiIcon = () => (
  <Svg w={30} h={30}>
    <path d="M2 26C3 14 12 5 26 3" stroke="#9aa2a6" strokeWidth="2.2" />
    <path d="M9 27c1-8 7-13 16-15" stroke="#d8dcde" strokeWidth="2.2" />
    <path d="M16 27c1-4 4-7 9-8" stroke="#f2f2f2" strokeWidth="2.2" />
    <circle cx="25" cy="25" r="3.5" fill="#f2f2f2" />
  </Svg>
);
const PowerIcon = () => (
  <Svg w={34} h={30}>
    <path d="M8 9h24v17H8z" stroke="#f2f2f2" strokeWidth="2" />
    <path d="M2 1v6M8 1v6M0 7h10v5l-3 4H3l-3-4z" fill="#f2f2f2" stroke="#f2f2f2" />
  </Svg>
);
const VolumeIcon = () => (
  <Svg w={32} h={32}>
    <path d="M1 11h6l8-8v26l-8-8H1z" stroke="#f2f2f2" strokeWidth="1.8" />
    <path d="M20 11c2 3 2 7 0 10M25 7c4 5 4 13 0 18" stroke="#f2f2f2" strokeWidth="1.8" />
  </Svg>
);
const PenIcon = () => (
  <Svg w={32} h={36}>
    <path d="M28 3c3 3 1 6-2 9L12 28c-3 3-6 6-9 5s0-5 2-8L20 7c3-3 6-6 8-4z" stroke="#f2f2f2" strokeWidth="2" />
    <path d="M17 10l7 7" stroke="#f2f2f2" strokeWidth="2" />
  </Svg>
);
const NoticeIcon = () => (
  <Svg w={34} h={36}>
    <path d="M1 1h31v26H22l-6 8v-8H1z" fill="#fff" />
    <path d="M7 8h19M7 14h19M7 20h12" stroke="#25333b" strokeWidth="2.4" />
  </Svg>
);

/* ---------- data ---------- */
const columns = [
  ["A", 144], ["B", 144], ["C", 144], ["D", 240], ["E", 88], ["F", 144], ["G", 144],
  ["H", 144], ["I", 144], ["J", 144], ["K", 144], ["L", 144], ["M", 144], ["N", 144], ["", 17],
];
const bValues = [2, 4, 3, 1, 4, 4, 2, 4, 2, 1, 5, 3, 1, 5, 3, 2, 5, 2, 5, 3, 1, 3, 5, 2, 1, 2, 2, 2, 4];
const sheets = ["Sheet1", "Sheet4", "Sheet2", "Sheet3", "Sheet5", "Sheet7", "Sheet8"];
const ribbonTabs = ["插入", "页面布局", "公式", "数据", "审阅", "视图", "开发工具", "帮助"];

const PieChart = () => (
  <ChartSvg viewBox="427 528 954 631">
    <defs>
      <linearGradient id="blueSide" x1="0" x2="1" y1="0" y2="0">
        <stop offset="0" stopColor="#4a78ad" />
        <stop offset="1" stopColor="#1f3a5a" />
      </linearGradient>
      <linearGradient id="tealSide" x1="0" x2="1" y1="0" y2="0">
        <stop offset="0" stopColor="#18414e" />
        <stop offset="1" stopColor="#21505f" />
      </linearGradient>
    </defs>
    <path d="M601 880A302 93 0 0 0 1070 951" stroke="#c6ccd2" strokeWidth="5" />
    <path d="M599 800A302 93 0 0 0 676 857L678 933A302 93 0 0 1 601 880Z" fill="#b5433f" />
    <path d="M676 857A302 93 0 0 0 1073 872L1070 948A302 93 0 0 1 678 933Z" fill="url(#blueSide)" stroke="#dbe6f0" strokeWidth="1" />
    <path d="M901 781 1203 803 1203 813 950 793 1073 872Z" fill="#2a2a4e" />
    <path d="M901 781 734 718A302 93 0 0 1 1112.5 729Z" fill="#97b34f" stroke="#e4edcf" strokeWidth="1" />
    <path d="M901 781 1112.5 729A302 93 0 0 1 1203 802L906 783Z" fill="#7a5c99" stroke="#e3dcec" strokeWidth="1" />
    <path d="M901 781 676 857A302 93 0 0 1 734 718Z" fill="#bc4a46" stroke="#f3d9d8" strokeWidth="1.2" />
    <path d="M901 781 1073 872A302 93 0 0 1 676 857Z" fill="#4475ad" stroke="#dbe8f5" strokeWidth="1.4" />
    <path d="M950 793 950 800 1073 872 1070 937 1130 963 1134 886Z" fill="#1b4551" />
    <path d="M1134 886A302 93 0 0 0 1257 817L1255 884A302 93 0 0 1 1130 963Z" fill="url(#tealSide)" stroke="#d5e4e8" strokeWidth="1" />
    <path d="M950 793 1257 817A302 93 0 0 1 1134 886Z" fill="#46a3bb" stroke="#d5eef3" strokeWidth="1.2" />

    <ChartText x="933" y="649">比较满意</ChartText>
    <ChartText x="933" y="683" $fs={24}>25%</ChartText>
    <ChartText x="684" y="774" $c="#fff">满意</ChartText>
    <ChartText x="684" y="806" $c="#fff" $fs={24}>27%</ChartText>
    <ChartText x="884" y="836" $c="#0f2440">非常满意</ChartText>
    <ChartText x="884" y="870" $c="#0f2440" $fs={24}>20%</ChartText>
    <ChartText x="1238" y="755">不满意</ChartText>
    <ChartText x="1238" y="789" $fs={24}>15%</ChartText>
    <ChartText x="1275" y="961">很不满意</ChartText>
    <ChartText x="1275" y="995" $fs={24}>13%</ChartText>
  </ChartSvg>
);

const App = () => (
  <Page>
    <GlobalStyle />
    <TitleBar>
      <QuickAccess>
        <Slot $w={60}><SaveIcon /></Slot>
        <Slot $w={52}><UndoIcon /></Slot>
        <Slot $w={10} $mr={8}><Caret $c="#fff" /></Slot>
        <Slot $w={52}><RedoIcon /></Slot>
        <Slot $w={8}><Caret $c="#5f9a7c" /></Slot>
        <Slot $w={74}><CustomizeIcon /></Slot>
      </QuickAccess>
      <TitleText>3  [兼容模式]  -  Excel</TitleText>
      <WindowControls>
        <ControlSlot $w={68}><WarningIcon /></ControlSlot>
        <ControlSlot $w={90}><AvatarIcon /></ControlSlot>
        <ControlSlot $w={79}><RibbonDisplayIcon /></ControlSlot>
        <ControlSlot $w={77}><MinIcon /></ControlSlot>
        <ControlSlot $w={77}><RestoreIcon /></ControlSlot>
        <ControlSlot $w={77}><CloseIcon /></ControlSlot>
      </WindowControls>
    </TitleBar>
    <TabStrip>
      <Tab>文件</Tab>
      <Tab $active>开始</Tab>
      {ribbonTabs.map((t) => (
        <Tab key={t}>{t}</Tab>
      ))}
      <SearchHint>
        <BulbIcon />
        操作说明搜索
      </SearchHint>
      <ShareBox>
        <ShareIcon />
        共享
      </ShareBox>
    </TabStrip>

    <Ribbon>
      <Group $w={246}>
        <GroupBody $pl={8}>
          <BigButton $w={100} $off>
            <BigIcon><PasteIcon /></BigIcon>
            <BigLine>粘贴</BigLine>
            <BigLine><Caret $c="#b5b5b5" /></BigLine>
          </BigButton>
          <SmallColumn $w={130}>
            <SmallRow><Slot $w={27} $mr={8}><CutIcon /></Slot>剪切</SmallRow>
            <SmallRow><Slot $w={27} $mr={8}><CopyIcon /></Slot>复制<SmallCaret $ml={19}><Caret /></SmallCaret></SmallRow>
            <SmallRow><Slot $w={27} $mr={8}><BrushIcon /></Slot>格式刷</SmallRow>
          </SmallColumn>
        </GroupBody>
        <GroupLabelRow $launcher>剪贴板<Launcher /></GroupLabelRow>
      </Group>

      <Group $w={496}>
        <GroupBody $pl={18}>
          <ToolColumn $w={470}>
            <ToolRow $mt={16}>
              <ComboBox $w={280}>宋体<Chevron /></ComboBox>
              <ComboBox $w={92}>12<Chevron /></ComboBox>
              <Slot $w={40}><SansGlyph $fs={26}>A</SansGlyph><ArrowTri dir="up" s={7} /></Slot>
              <Slot $w={40}><SansGlyph $fs={22}>A</SansGlyph><ArrowTri dir="down" s={7} /></Slot>
            </ToolRow>
            <ToolRow $mt={16}>
              <Slot $w={42}><SansGlyph $fs={28} $b>B</SansGlyph></Slot>
              <Slot $w={44}><ToolGlyph $fs={30} $i $b>I</ToolGlyph></Slot>
              <Slot $w={44}><SansGlyph $fs={28} $u>U</SansGlyph></Slot>
              <Slot $w={28}><Caret /></Slot>
              <ToolSep $w={8} />
              <Slot $w={46}><BorderIcon /></Slot>
              <Slot $w={24}><Caret /></Slot>
              <ToolSep $w={10} />
              <Slot $w={46}><FillIcon /></Slot>
              <Slot $w={22}><Caret /></Slot>
              <Slot $w={44}><FontColorIcon /></Slot>
              <Slot $w={28}><Caret /></Slot>
              <ToolSep $w={6} />
              <Slot $w={50}>
                <svg width="34" height="38" viewBox="0 0 34 38">
                  <text x="3" y="13" fontSize="14" fill="#555" fontFamily="Liberation Sans">wén</text>
                  <text x="7" y="36" fontSize="22" fill="#3d7fc0" fontFamily="Noto Sans CJK SC">文</text>
                </svg>
              </Slot>
              <Slot $w={20}><Caret /></Slot>
            </ToolRow>
          </ToolColumn>
        </GroupBody>
        <GroupLabelRow $launcher>字体<Launcher /></GroupLabelRow>
      </Group>

      <Group $w={485}>
        <GroupBody $pl={16}>
          <ToolColumn $w={252}>
            <ToolRow $mt={15}>
              <Slot $w={45}><LinesIcon ys={[4, 10, 16]} /></Slot>
              <Slot $w={45}><LinesIcon ys={[10, 16, 22]} /></Slot>
              <Slot $w={45} $h={46} $bg="#c6c6c6"><LinesIcon ys={[14, 20, 26]} /></Slot>
              <ToolSep $w={8} />
              <Slot $w={48}><OrientIcon /></Slot>
              <Slot $w={12}><Caret /></Slot>
            </ToolRow>
            <ToolRow $mt={18}>
              <Slot $w={45}><LinesIcon ys={[3, 9, 15, 21, 27]} align="left" /></Slot>
              <Slot $w={45}><LinesIcon ys={[3, 9, 15, 21, 27]} /></Slot>
              <Slot $w={45}><LinesIcon ys={[3, 9, 15, 21, 27]} align="right" /></Slot>
              <ToolSep $w={8} />
              <Slot $w={48}><IndentIcon out /></Slot>
              <Slot $w={40}><IndentIcon /></Slot>
            </ToolRow>
          </ToolColumn>
          <ToolColumn $w={200}>
            <ToolRow $mt={15}><Slot $w={43}><WrapIcon /></Slot>自动换行</ToolRow>
            <ToolRow $mt={18}><Slot $w={43}><MergeIcon /></Slot>合并后居中<SmallCaret $ml={20}><Caret /></SmallCaret></ToolRow>
          </ToolColumn>
        </GroupBody>
        <GroupLabelRow $launcher>对齐方式<Launcher /></GroupLabelRow>
      </Group>

      <Group $w={288}>
        <GroupBody $pl={18}>
          <ToolColumn $w={260}>
            <ToolRow $mt={16}><ComboBox $w={255}>常规<Chevron /></ComboBox></ToolRow>
            <ToolRow $mt={16}>
              <Slot $w={42}><CurrencyIcon /></Slot>
              <Slot $w={26}><Caret /></Slot>
              <Slot $w={40}><SansGlyph $fs={30}>%</SansGlyph></Slot>
              <Slot $w={48}><ToolGlyph $fs={44} $b $up={-9}>,</ToolGlyph></Slot>
              <ToolSep $w={10} />
              <Slot $w={48}><DecimalIcon /></Slot>
              <Slot $w={38}><DecimalIcon down /></Slot>
            </ToolRow>
          </ToolColumn>
        </GroupBody>
        <GroupLabelRow $launcher>数字<Launcher /></GroupLabelRow>
      </Group>

      <Group $w={388}>
        <GroupBody $pl={20}>
          <BigButton $w={100}>
            <BigIcon><CondFormatIcon /></BigIcon>
            <BigLine>条件格式</BigLine>
            <BigLine><Caret /></BigLine>
          </BigButton>
          <BigButton $w={124}>
            <BigIcon><TableFormatIcon tall /></BigIcon>
            <BigLine>套用</BigLine>
            <BigLine>表格格式<Caret /></BigLine>
          </BigButton>
          <BigButton $w={128}>
            <BigIcon><TableFormatIcon /></BigIcon>
            <BigLine>单元格样式</BigLine>
            <BigLine><Caret /></BigLine>
          </BigButton>
        </GroupBody>
        <GroupLabelRow>样式</GroupLabelRow>
      </Group>

      <Group $w={284}>
        <GroupBody $pl={15}>
          <BigButton $w={85}>
            <BigIcon><InsertIcon /></BigIcon>
            <BigLine>插入</BigLine>
            <BigLine><Caret /></BigLine>
          </BigButton>
          <BigButton $w={85}>
            <BigIcon><DeleteIcon /></BigIcon>
            <BigLine>删除</BigLine>
            <BigLine><Caret /></BigLine>
          </BigButton>
          <BigButton $w={85}>
            <BigIcon><FormatIcon /></BigIcon>
            <BigLine>格式</BigLine>
            <BigLine><Caret /></BigLine>
          </BigButton>
        </GroupBody>
        <GroupLabelRow>单元格</GroupLabelRow>
      </Group>

      <Group $w={470}>
        <GroupBody $pl={19}>
          <SmallColumn $w={180}>
            <SmallRow><Slot $w={44}><SigmaIcon /></Slot>自动求和<SmallCaret $ml={20}><Caret /></SmallCaret></SmallRow>
            <SmallRow><Slot $w={44}><FillDownIcon /></Slot>填充<SmallCaret $ml={8}><Caret /></SmallCaret></SmallRow>
            <SmallRow><Slot $w={44}><EraserIcon /></Slot>清除<SmallCaret $ml={8}><Caret /></SmallCaret></SmallRow>
          </SmallColumn>
          <BigButton $w={122}>
            <BigIcon><SortIcon /></BigIcon>
            <BigLine>排序和筛选</BigLine>
            <BigLine><Caret /></BigLine>
          </BigButton>
          <BigButton $w={134}>
            <BigIcon><FindIcon /></BigIcon>
            <BigLine>查找和选择</BigLine>
            <BigLine><Caret /></BigLine>
          </BigButton>
        </GroupBody>
        <GroupLabelRow>编辑</GroupLabelRow>
      </Group>

      <Collapse>
        <svg width="20" height="12" viewBox="0 0 20 12">
          <path d="M1 11 10 2l9 9" stroke="#555" strokeWidth="1.8" fill="none" />
        </svg>
      </Collapse>
    </Ribbon>

    <FormulaBar>
      <NameBox>J15<Caret $big /></NameBox>
      <Grip><span /><span /><span /></Grip>
      <FxBox>
        <Slot $w={74}>
          <svg width="24" height="24" viewBox="0 0 24 24"><path d="M3 3l18 18M21 3 3 21" stroke="#bdbdbd" strokeWidth="3.5" /></svg>
        </Slot>
        <Slot $w={68}>
          <svg width="28" height="24" viewBox="0 0 28 24"><path d="M2 14l8 8L26 3" stroke="#bdbdbd" strokeWidth="3.5" fill="none" /></svg>
        </Slot>
        <Slot $w={76}><FxGlyph>fx</FxGlyph></Slot>
      </FxBox>
      <FormulaInput>
        <svg width="18" height="12" viewBox="0 0 18 12"><path d="M1 10 9 2l8 8" stroke="#555" strokeWidth="2" fill="none" /></svg>
      </FormulaInput>
    </FormulaBar>

    <Main>
      <LeftSide>
        <SheetRow>
          <SheetArea>
            <ColumnHeader>
              <Corner><CornerTriangle /></Corner>
              {columns.map(([name, w]) => (
                <ColumnCell key={name || "end"} $w={w} $sel={name === "J"}>{name}</ColumnCell>
              ))}
            </ColumnHeader>
            <Rows>
              {bValues.map((b, i) => {
                const clip = i === 0;
                const rowNo = i + 12;
                return (
                  <Row key={rowNo} $h={clip ? 9 : 42}>
                    <RowHead $clip={clip} $sel={rowNo === 15}>{rowNo}</RowHead>
                    {columns.map(([name, w], c) => (
                      <Cell key={name || "end"} $w={w} $clip={clip}>
                        {c === 0 ? rowNo - 1 : c === 1 ? b : ""}
                      </Cell>
                    ))}
                  </Row>
                );
              })}
            </Rows>
            <ChartBox><PieChart /></ChartBox>
            <SelectedCell />
            <CrossCursor width="32" height="32" viewBox="0 0 32 32">
              <path d="M11 2h10v9h9v10h-9v9H11v-9H2V11h9z" fill="#fff" stroke="#222" strokeWidth="2.4" />
            </CrossCursor>
          </SheetArea>
          <VScroll>
            <ScrollButton><ArrowTri dir="up" /></ScrollButton>
            <VThumb />
            <ScrollButton><ArrowTri dir="down" /></ScrollButton>
          </VScroll>
        </SheetRow>
        <TabBar>
          <TabNav>
            <ArrowTri dir="left" c="#cacaca" s={9} />
            <ArrowTri dir="right" c="#cacaca" s={9} />
          </TabNav>
          {sheets.map((s) => (
            <SheetTab key={s} $active={s === "Sheet8"}>{s}</SheetTab>
          ))}
          <AddSheet><PlusCircle /></AddSheet>
          <TabGrip><span /><span /><span /></TabGrip>
          <HScroll>
            <ScrollButton $w={33} $h={35}><ArrowTri dir="left" s={10} /></ScrollButton>
            <HThumb />
            <HTrack />
            <ScrollButton $w={31} $h={35}><ArrowTri dir="right" s={10} /></ScrollButton>
          </HScroll>
        </TabBar>
      </LeftSide>

      <Pane>
        <PaneHead>
          <PaneTitle>设置形状格式</PaneTitle>
          <PaneTools>
            <ArrowTri dir="down" s={11} />
            <svg width="14" height="14" viewBox="0 0 14 14"><path d="M1 1l12 12M13 1 1 13" stroke="#666" strokeWidth="3" /></svg>
          </PaneTools>
        </PaneHead>
        <PaneIcons>
          <PaneIcon $w={60} $active><BucketPaneIcon /></PaneIcon>
          <PaneIcon $w={78}><PentagonIcon /></PaneIcon>
          <PaneIcon $w={62}><SizeIcon /></PaneIcon>
        </PaneIcons>
        <PaneRule />
        <Section $mt={-2}>
          <svg width="12" height="18" viewBox="0 0 12 18"><path d="M1 1l10 8-10 8z" stroke="#b5b5b5" fill="none" /></svg>
          填充
        </Section>
        <Section $mt={0} $open>
          <svg width="14" height="14" viewBox="0 0 14 14"><path d="M13 1v12H1z" fill="#444" /></svg>
          线条
        </Section>
        <RadioList>
          <RadioRow><RadioDot /><span>无线条(<u>N</u>)</span></RadioRow>
          <RadioRow><RadioDot /><span>实线(<u>S</u>)</span></RadioRow>
          <RadioRow><RadioDot /><span>渐变线(<u>G</u>)</span></RadioRow>
        </RadioList>
      </Pane>
    </Main>
    <PaneScrollMark />

    <StatusBar>
      <StatusLeft>就绪<NotesIcon /></StatusLeft>
      <ViewButton $w={75} $active><NormalViewIcon /></ViewButton>
      <ViewButton $w={76}><PageViewIcon /></ViewButton>
      <ViewButton $w={76}><BreakViewIcon /></ViewButton>
      <ZoomBlock>
        <svg width="10" height="8" viewBox="0 0 10 8"><rect width="10" height="8" fill="#555" /></svg>
        <ZoomTrack><ZoomThumb /></ZoomTrack>
        <svg width="18" height="28" viewBox="0 0 18 28"><path d="M9 3v22M2 14h14" stroke="#777" strokeWidth="2" /></svg>
        <ZoomValue>100%</ZoomValue>
      </ZoomBlock>
    </StatusBar>

    <Taskbar>
      <StartButton><WindowsIcon /></StartButton>
      <SearchBox><MagnifierIcon />在这里输入你要搜索的内容</SearchBox>
      <TaskIcon $w={98}><CortanaIcon /></TaskIcon>
      <TaskIcon $w={92}><TaskViewIcon /></TaskIcon>
      <TaskIcon $w={79} $ml={18} $open><FaEdgeLegacy size={46} /></TaskIcon>
      <TaskIcon $w={116}><MailIcon /></TaskIcon>
      <TaskIcon $w={79} $open><FolderIcon /></TaskIcon>
      <TaskIcon $w={95} $ml={12} $active $open><ExcelIcon /></TaskIcon>
      <Tray>
        <ImeBadge>拼</ImeBadge>
        <TrayItem $w={40} />
        <TrayItem $w={40}>
          <svg width="18" height="24" viewBox="0 0 18 24"><ellipse cx="9" cy="12" rx="8" ry="11" fill="#2fa45c" /><path d="M9 7v10M4 12h10" stroke="#d7f0df" strokeWidth="2" /></svg>
        </TrayItem>
        <TrayItem $w={44}>
          <svg width="26" height="16" viewBox="0 0 26 16"><path d="M2 15 13 2l11 13" stroke="#f2f2f2" strokeWidth="2" fill="none" /></svg>
        </TrayItem>
        <TrayItem $w={20} />
        <TrayItem $w={52}><WifiIcon /></TrayItem>
        <TrayItem $w={68}><PowerIcon /></TrayItem>
        <TrayItem $w={82}><VolumeIcon /></TrayItem>
        <TrayItem $w={40}><PenIcon /></TrayItem>
        <TrayItem $w={82} $fs={32}>中</TrayItem>
        <Clock>13:39<br />2020/2/3</Clock>
        <TrayItem $w={116}><NoticeIcon /></TrayItem>
      </Tray>
    </Taskbar>
  </Page>
);

export default App;
